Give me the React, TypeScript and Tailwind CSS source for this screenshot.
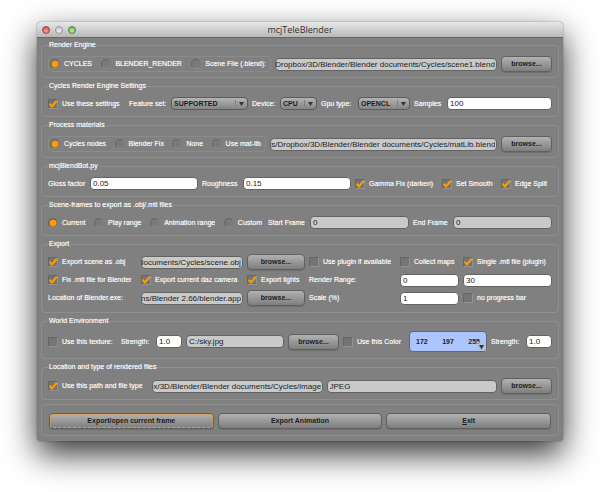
import { ReactNode } from 'react';
import clsx from 'clsx';

const BUTTON_STYLE =
  'h-4 min-w-0 rounded-[4px] border border-[#606060] bg-linear-to-b from-[#b2b2b2] to-[#7e7e7e] text-center text-[7px] leading-[12px] font-bold text-[#1c1c1c] shadow-[0_1px_1px_#6e6e6e]';

interface GroupProps {
  title: string;
  className?: string;
  children: ReactNode;
}

function Group({ title, className, children }: GroupProps) {
  return (
    <fieldset className={clsx('min-w-0 rounded-[4px] border border-[#8f8f8f] px-[6px]', className)}>
      <legend className="h-3 px-px leading-[12px] whitespace-nowrap">{title}</legend>
      {children}
    </fieldset>
  );
}

interface OptionProps {
  label: string;
  checked?: boolean;
}

function Check({ label, checked = false }: OptionProps) {
  return (
    <label className="flex shrink-0 items-center gap-1 whitespace-nowrap">
      <span className="relative size-[10px] shrink-0">
        <input
          type="checkbox"
          defaultChecked={checked}
          className="peer block size-[10px] appearance-none border border-[#666] border-r-[#929292] border-b-[#929292] bg-[#747474]"
        />
        <svg
          viewBox="0 0 10 10"
          className="pointer-events-none absolute inset-0 hidden size-[10px] peer-checked:block"
        >
          <path d="M1.6 4.8 L4 7.4 L8.8 1.8" fill="none" stroke="#ff9a05" strokeWidth="2.2" />
        </svg>
      </span>
      {label}
    </label>
  );
}

function Radio({ name, label, checked = false }: OptionProps & { name: string }) {
  return (
    <label className="flex shrink-0 items-center gap-1 whitespace-nowrap">
      <input
        type="radio"
        name={name}
        defaultChecked={checked}
        className="size-[10px] shrink-0 appearance-none rounded-full border border-[#666] border-r-[#808080] border-b-[#8d8d8d] bg-[#7a7a7a] checked:bg-[radial-gradient(circle,#ff9a05_3px,#646464_4px)]"
      />
      {label}
    </label>
  );
}

interface FieldProps {
  label: string;
  value: string;
  muted?: boolean;
  end?: boolean;
}

// Long paths show their tail, so the file name stays readable
const scrollToEnd = (el: HTMLInputElement | null) => {
  if (el) el.scrollLeft = el.scrollWidth;
};

function Field({ label, value, muted = false, end = false }: FieldProps) {
  return (
    <input
      type="text"
      ref={end ? scrollToEnd : undefined}
      aria-label={label}
      defaultValue={value}
      className={clsx(
        'h-[13px] w-full min-w-0 rounded-[4px] border border-[#636363] text-[8px] leading-[11px] text-[#222]',
        muted ? 'bg-[#c9c9c9]' : 'bg-white',
        end ? 'pr-px text-right' : 'px-[2px]',
      )}
    />
  );
}

function Dropdown({ label, value }: { label: string; value: string }) {
  return (
    <span className="relative block">
      <select
        aria-label={label}
        className="block h-[13px] w-full appearance-none rounded-[4px] border border-[#5c5c5c] bg-linear-to-b from-[#b4b4b4] to-[#858585] pl-[2px] text-[7px] leading-[11px] font-bold text-[#1c1c1c]"
      >
        <option>{value}</option>
      </select>
      <svg viewBox="0 0 14 13" className="pointer-events-none absolute top-0 right-0 h-[13px] w-[14px]">
        <path d="M1.5 3 V10" stroke="#7d7d7d" />
        <path d="M5 5 H10 L7.5 9 Z" fill="#333" />
      </svg>
    </span>
  );
}

function Browse() {
  return (
    <button type="button" className={BUTTON_STYLE}>
      browse...
    </button>
  );
}

export default function App() {
  return (
    <div className="min-h-screen overflow-hidden bg-white px-[37px] pt-[22px] font-['Liberation_Sans',Arial,sans-serif] text-[7px] leading-[12px] text-white">
      <main className="rounded-[4px] bg-[#808080] shadow-[0_13px_32px_rgba(0,0,0,0.8),0_0_2px_rgba(0,0,0,0.4)]">
        <header className="grid h-4 grid-cols-[1fr_auto_1fr] items-center rounded-t-[4px] border-b border-[#666] bg-linear-to-b from-[#e8e8e8] to-[#b8b8b8] px-[5px]">
          <div className="flex gap-[5px]">
            <button type="button" aria-label="Close" className="size-2 rounded-full border border-[#8f4a48] bg-[radial-gradient(circle_at_50%_70%,#ff9c94,#d8403c)]" />
            <button type="button" aria-label="Minimize" className="size-2 rounded-full border border-[#9a9a9a] bg-[radial-gradient(circle_at_50%_70%,#eee,#c0c0c0)]" />
            <button type="button" aria-label="Zoom" className="size-2 rounded-full border border-[#557a45] bg-[radial-gradient(circle_at_50%_70%,#b9f09a,#5fae48)]" />
          </div>
          <h1 className="font-['Open_Sans','Noto_Sans',sans-serif] text-[9px] leading-[14px] text-[#333]">mcjTeleBlender</h1>
        </header>

        <form
          className="flex flex-col gap-[2px] px-1 pt-px pb-[5px] [text-shadow:0_0_1px_rgba(255,255,255,0.6)]"
          onSubmit={(e) => e.preventDefault()}
        >
          <Group title="Render Engine" className="py-[5px]">
            <div className="grid grid-cols-[223px_1fr_51px] items-center gap-1">
              <div className="flex h-4 items-center justify-between rounded-[3px] border border-[#8b8b8b] pr-1 pl-px">
                <Radio name="engine" label="CYCLES" checked />
                <Radio name="engine" label="BLENDER_RENDER" />
                <Radio name="engine" label="Scene File (.blend):" />
              </div>
              <Field label="Scene file" value="/Dropbox/3D/Blender/Blender documents/Cycles/scene1.blend" muted end />
              <Browse />
            </div>
          </Group>

          <Group title="Cycles Render Engine Settings" className="pt-[5px] pb-[6px]">
            <div className="grid grid-cols-[77px_38px_77px_24px_37px_33px_52px_29px_1fr] items-center gap-x-1 whitespace-nowrap">
              <Check label="Use these settings" checked />
              <span>Feature set:</span>
              <Dropdown label="Feature set" value="SUPPORTED" />
              <span>Device:</span>
              <Dropdown label="Device" value="CPU" />
              <span>Gpu type:</span>
              <Dropdown label="Gpu type" value="OPENCL" />
              <span>Samples</span>
              <Field label="Samples" value="100" />
            </div>
          </Group>

          <Group title="Process materials" className="py-[5px]">
            <div className="grid grid-cols-[218px_1fr_51px] items-center gap-x-1">
              <div className="flex h-4 items-center justify-between rounded-[3px] border border-[#8b8b8b] pr-1 pl-px">
                <Radio name="materials" label="Cycles nodes" checked />
                <Radio name="materials" label="Blender Fix" />
                <Radio name="materials" label="None" />
                <Radio name="materials" label="Use mat-lib" />
              </div>
              <Field label="Material library" value="ts/Dropbox/3D/Blender/Blender documents/Cycles/matLib.blend" muted end />
              <Browse />
            </div>
          </Group>

          <Group title="mcjBlendBot.py" className="pt-[5px] pb-[6px]">
            <div className="grid grid-cols-[38px_1fr_37px_1fr_83px_55px_51px] items-center gap-x-1 whitespace-nowrap">
              <span>Gloss factor</span>
              <Field label="Gloss factor" value="0.05" />
              <span>Roughness</span>
              <Field label="Roughness" value="0.15" />
              <Check label="Gamma Fix (darken)" checked />
              <Check label="Set Smooth" checked />
              <Check label="Edge Split" checked />
            </div>
          </Group>

          <Group title="Scene-frames to export as .obj/.mtl files" className="pt-[5px] pb-[6px]">
            <div className="grid grid-cols-[216px_38px_1fr_36px_1fr] items-center gap-x-1 whitespace-nowrap">
              <div className="flex items-center justify-between pr-[2px]">
                <Radio name="frames" label="Current" checked />
                <Radio name="frames" label="Play range" />
                <Radio name="frames" label="Animation range" />
                <Radio name="frames" label="Custom" />
              </div>
              <span>Start Frame</span>
              <Field label="Start Frame" value="0" muted />
              <span>End Frame</span>
              <Field label="End Frame" value="0" muted />
            </div>
          </Group>

          <Group title="Export" className="pt-1 pb-[6px]">
            <div className="grid auto-rows-[16px] grid-cols-[89px_102px_58px_87px_59px_1fr] items-center gap-x-1 gap-y-[2px] whitespace-nowrap">
              <Check label="Export scene as .obj" checked />
              <Field label="Scene path" value="documents/Cycles/scene.obj" muted end />
              <Browse />
              <Check label="Use plugin if available" />
              <Check label="Collect maps" />
              <Check label="Single .mtl file (plugin)" checked />

              <Check label="Fix .mtl file for Blender" checked />
              <Check label="Export current daz camera" checked />
              <Check label="Export lights" checked />
              <span>Render Range:</span>
              <Field label="Range start" value="0" />
              <Field label="Range end" value="30" />

              <span>Location of Blender.exe:</span>
              <Field label="Location of Blender.exe" value="ns/Blender 2.66/blender.app" muted end />
              <Browse />
              <span>Scale (%)</span>
              <Field label="Scale" value="1" />
              <Check label="no progress bar" />
            </div>
          </Group>

          <Group title="World Environment" className="pt-1 pb-[6px]">
            <div className="grid grid-cols-[69px_31px_26px_1fr_51px_62px_78px_31px_26px] items-center gap-x-1 whitespace-nowrap">
              <Check label="Use this texture:" />
              <span>Strength:</span>
              <Field label="Texture strength" value="1.0" />
              <Field label="Texture" value="C:/sky.jpg" muted />
              <Browse />
              <Check label="Use this Color" />
              <button
                type="button"
                aria-label="Color"
                className="relative flex h-[21px] items-center justify-between rounded-[4px] border border-[#5f6677] bg-[#acc5ff] px-[6px] font-bold text-[#222]"
              >
                <span>172</span>
                <span>197</span>
                <span>255</span>
                <svg viewBox="0 0 9 9" className="absolute right-0 bottom-0 size-[9px]">
                  <path d="M0 0 H9 V9 H0 Z" fill="#b5bfd6" fillOpacity="0.7" />
                  <path d="M2 3 H7 L4.5 7.5 Z" fill="#333" />
                </svg>
              </button>
              <span>Strength:</span>
              <Field label="Color strength" value="1.0" />
            </div>
          </Group>

          <Group title="Location and type of rendered files" className="py-[5px]">
            <div className="grid grid-cols-[100px_1fr_1fr_51px] items-center gap-x-1">
              <Check label="Use this path and file type" checked />
              <Field label="Output path" value="ox/3D/Blender/Blender documents/Cycles/image" muted end />
              <Field label="File type" value="JPEG" muted />
              <Browse />
            </div>
          </Group>

          <div className="mt-[2px] grid grid-cols-3 gap-1 rounded-[4px] border border-[#8f8f8f] px-[7px] pt-2 pb-[6px]">
            <button type="button" className={clsx(BUTTON_STYLE, 'outline-1 -outline-offset-2 outline-dashed outline-[#e0a040]')}>
              Export/open current frame
            </button>
            <button type="button" className={BUTTON_STYLE}>
              Export Animation
            </button>
            <button type="button" className={BUTTON_STYLE}>
              <u>E</u>xit
            </button>
          </div>
        </form>
      </main>
    </div>
  );
}
